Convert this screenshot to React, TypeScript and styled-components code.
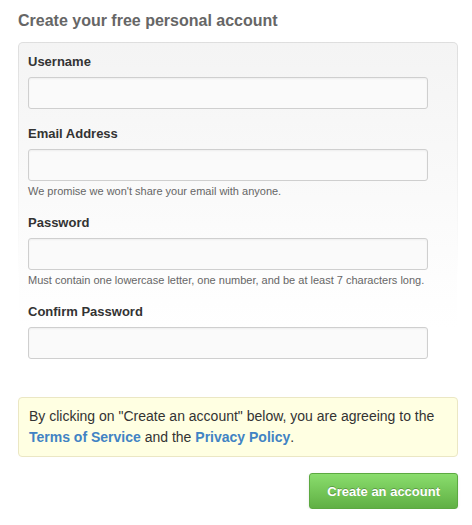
import styled, { createGlobalStyle } from "styled-components";

const GlobalStyle = createGlobalStyle`
  html, body {
    margin: 0;
    padding: 0;
    background: #fff;
    font-family: "Liberation Sans", Arial, sans-serif;
  }
`;

const Page = styled.div`
  width: 440px;
  padding: 11px 0 0 18px;
`;

const Title = styled.h2`
  margin: 0 0 11px;
  font-size: 16px;
  line-height: 20px;
  font-weight: bold;
  color: #666;
`;

const FormPanel = styled.div`
  box-sizing: border-box;
  padding: 10px 29px 19px 9px;
  border: 1px solid transparent;
  border-radius: 5px;
  background:
    linear-gradient(#f4f4f4, #ffffff 85%) padding-box,
    linear-gradient(#dedede, #ffffff 70%) border-box;
`;

const Field = styled.div`
  margin-bottom: 16px;

  &:last-child {
    margin-bottom: 0;
  }
`;

const Label = styled.label`
  display: block;
  margin-bottom: 6px;
  font-size: 13px;
  line-height: 18px;
  font-weight: bold;
  color: #333;
`;

const Input = styled.input`
  display: block;
  box-sizing: border-box;
  width: 400px;
  height: 32px;
  margin: 0;
  padding: 6px 8px;
  font-family: inherit;
  font-size: 13px;
  border: 1px solid #cfcfcf;
  border-radius: 3px;
  background: #fafafa;
  box-shadow: inset 0 1px 2px rgba(0, 0, 0, 0.05);
  outline: none;
`;

const Note = styled.p`
  margin: 3px 0 0;
  font-size: 11px;
  line-height: 14px;
  color: #666;
`;

const Notice = styled.div`
  box-sizing: border-box;
  margin-top: 18px;
  padding: 8px 10px;
  border: 1px solid #ebe7c4;
  border-radius: 4px;
  background: #ffffe2;
  font-size: 14px;
  line-height: 21px;
  color: #333;
`;

const Link = styled.a`
  color: #4183c4;
  font-weight: bold;
  text-decoration: none;
`;

const Actions = styled.div`
  display: flex;
  justify-content: flex-end;
  margin-top: 16px;
`;

const SubmitButton = styled.button`
  box-sizing: border-box;
  height: 36px;
  padding: 0 17px;
  font-family: inherit;
  font-size: 13px;
  font-weight: bold;
  color: #fff;
  text-shadow: 0 -1px 0 rgba(0, 0, 0, 0.25);
  border: 1px solid #5ca941;
  border-radius: 3px;
  background: linear-gradient(#8add6d, #60b044);
  box-shadow: 0 1px 3px rgba(0, 0, 0, 0.1);
  cursor: pointer;
`;

const fields = [
  { id: "username", label: "Username", type: "text" },
  {
    id: "email",
    label: "Email Address",
    type: "email",
    note: "We promise we won't share your email with anyone.",
  },
  {
    id: "password",
    label: "Password",
    type: "password",
    note: "Must contain one lowercase letter, one number, and be at least 7 characters long.",
  },
  { id: "confirm", label: "Confirm Password", type: "password" },
];

export default function App() {
  return (
    <>
      <GlobalStyle />
      <Page>
        <Title>Create your free personal account</Title>
        <FormPanel>
          {fields.map((f) => (
            <Field key={f.id}>
              <Label htmlFor={f.id}>{f.label}</Label>
              <Input id={f.id} type={f.type} />
              {f.note && <Note>{f.note}</Note>}
            </Field>
          ))}
        </FormPanel>
        <Notice>
          By clicking on "Create an account" below, you are agreeing to the{" "}
          <Link href="#">Terms of Service</Link> and the{" "}
          <Link href="#">Privacy Policy</Link>.
        </Notice>
        <Actions>
          <SubmitButton type="button">Create an account</SubmitButton>
        </Actions>
      </Page>
    </>
  );
}
